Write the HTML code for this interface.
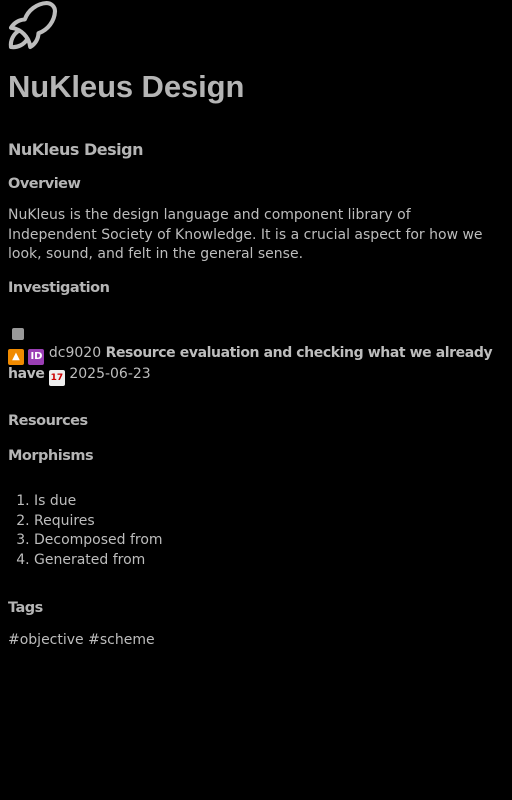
<!DOCTYPE html>
<html><head><style>
body{margin:0;background:#000;color:#bdbdbd;font-family:"DejaVu Sans",sans-serif;width:512px;height:800px;overflow:hidden}
h1{position:absolute;left:8px;top:69px;margin:0;font-size:31px;font-weight:bold;color:#b5b5b5;font-family:"Liberation Sans",sans-serif;letter-spacing:-0.1px}
.a{position:absolute;left:8px;margin:0;font-weight:bold;font-size:14.5px;letter-spacing:-0.5px;color:#b5b5b5}
p,.t{position:absolute;left:8px;right:16px;margin:0;font-size:14px;line-height:19.5px;color:#bdbdbd}
.t b{letter-spacing:-0.4px}
ol{position:absolute;left:0;top:492px;margin:0;padding-left:34px;font-size:14px;line-height:19.5px}
.e{display:inline-block;width:16px;height:16px;border-radius:2px;vertical-align:-2px;color:#fff;font-size:10px;text-align:center;line-height:16px;font-weight:bold}
</style></head><body>
<svg style="position:absolute;left:0px;top:-8px" width="66" height="66" viewBox="0 0 24 24" fill="none" stroke="#bdbdbd" stroke-width="1.5" stroke-linecap="round" stroke-linejoin="round"><path d="M4 13a8 8 0 0 1 7 7a6 6 0 0 0 3 -5a9 9 0 0 0 6 -8a3 3 0 0 0 -3 -3a9 9 0 0 0 -8 6a6 6 0 0 0 -5 3"/><path d="M7 14a6 6 0 0 0 -3 6a6 6 0 0 0 6 -3"/></svg>
<h1>NuKleus Design</h1>
<div class="a" style="top:140px;font-size:16px">NuKleus Design</div>
<div class="a" style="top:176px">Overview</div>
<p style="top:206px">NuKleus is the design language and component library of Independent Society of Knowledge. It is a crucial aspect for how we look, sound, and felt in the general sense.</p>
<div class="a" style="top:280px">Investigation</div>
<div style="position:absolute;left:12px;top:328px;width:12px;height:12px;background:#999;border-radius:2px"></div>
<div class="t" style="top:344px;right:10px"><span class="e" style="background:#f08a00">▲</span> <span class="e" style="background:#9b3fb5">ID</span> dc9020 <b>Resource evaluation and checking what we already have</b> <span class="e" style="background:#eee;color:#c00;font-size:9px">17</span> 2025-06-23</div>
<div class="a" style="top:413px">Resources</div>
<div class="a" style="top:448px">Morphisms</div>
<ol><li>Is due</li><li>Requires</li><li>Decomposed from</li><li>Generated from</li></ol>
<div class="a" style="top:600px">Tags</div>
<div class="t" style="top:631px">#objective #scheme</div>
</body></html>
